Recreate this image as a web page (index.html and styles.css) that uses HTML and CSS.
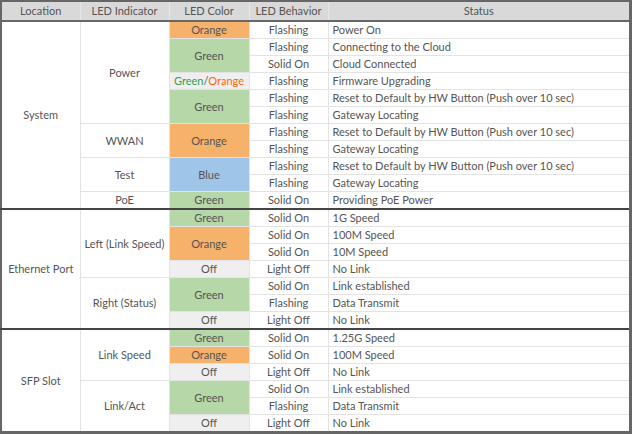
FILE: index.html
```html
<!DOCTYPE html>
<html>
<head>
<meta charset="utf-8">
<link rel="stylesheet" href="styles.css">
</head>
<body>
<table class="led">
  <colgroup>
    <col class="c-loc"><col class="c-ind"><col class="c-col"><col class="c-beh"><col class="c-sta">
  </colgroup>
  <thead>
    <tr><th>Location</th><th>LED Indicator</th><th>LED Color</th><th>LED Behavior</th><th>Status</th></tr>
  </thead>
  <tbody class="sec">
    <tr><td rowspan="11">System</td><td rowspan="6">Power</td><td class="orange">Orange</td><td>Flashing</td><td class="st">Power On</td></tr>
    <tr><td rowspan="2" class="green">Green</td><td>Flashing</td><td class="st">Connecting to the Cloud</td></tr>
    <tr><td>Solid On</td><td class="st">Cloud Connected</td></tr>
    <tr><td class="off"><span class="tg">Green</span>/<span class="to">Orange</span></td><td>Flashing</td><td class="st">Firmware Upgrading</td></tr>
    <tr><td rowspan="2" class="green">Green</td><td>Flashing</td><td class="st">Reset to Default by HW Button (Push over 10 sec)</td></tr>
    <tr><td>Flashing</td><td class="st">Gateway Locating</td></tr>
    <tr><td rowspan="2">WWAN</td><td rowspan="2" class="orange">Orange</td><td>Flashing</td><td class="st">Reset to Default by HW Button (Push over 10 sec)</td></tr>
    <tr><td>Flashing</td><td class="st">Gateway Locating</td></tr>
    <tr><td rowspan="2">Test</td><td rowspan="2" class="blue">Blue</td><td>Flashing</td><td class="st">Reset to Default by HW Button (Push over 10 sec)</td></tr>
    <tr><td>Flashing</td><td class="st">Gateway Locating</td></tr>
    <tr><td>PoE</td><td class="green">Green</td><td>Solid On</td><td class="st">Providing PoE Power</td></tr>
  </tbody>
  <tbody class="sec">
    <tr><td rowspan="7">Ethernet Port</td><td rowspan="4">Left (Link Speed)</td><td class="green">Green</td><td>Solid On</td><td class="st">1G Speed</td></tr>
    <tr><td rowspan="2" class="orange">Orange</td><td>Solid On</td><td class="st">100M Speed</td></tr>
    <tr><td>Solid On</td><td class="st">10M Speed</td></tr>
    <tr><td class="off">Off</td><td>Light Off</td><td class="st">No Link</td></tr>
    <tr><td rowspan="3">Right (Status)</td><td rowspan="2" class="green">Green</td><td>Solid On</td><td class="st">Link established</td></tr>
    <tr><td>Flashing</td><td class="st">Data Transmit</td></tr>
    <tr><td class="off">Off</td><td>Light Off</td><td class="st">No Link</td></tr>
  </tbody>
  <tbody class="sec">
    <tr><td rowspan="6">SFP Slot</td><td rowspan="3">Link Speed</td><td class="green">Green</td><td>Solid On</td><td class="st">1.25G Speed</td></tr>
    <tr><td class="orange">Orange</td><td>Solid On</td><td class="st">100M Speed</td></tr>
    <tr><td class="off">Off</td><td>Light Off</td><td class="st">No Link</td></tr>
    <tr><td rowspan="3">Link/Act</td><td rowspan="2" class="green">Green</td><td>Solid On</td><td class="st">Link established</td></tr>
    <tr><td>Flashing</td><td class="st">Data Transmit</td></tr>
    <tr><td class="off">Off</td><td>Light Off</td><td class="st">No Link</td></tr>
  </tbody>
</table>
</body>
</html>
```

FILE: styles.css
```css
html, body {
  margin: 0;
  padding: 0;
  background: #ffffff;
}
.led {
  width: 632px;
  border-collapse: collapse;
  table-layout: fixed;
  font-family: Lato, "Liberation Sans", sans-serif;
  font-size: 11px;
  color: #555555;
  border: 2px solid #666666;
  border-right-width: 3px;
  border-bottom-width: 3px;
}
.c-loc { width: 79px; }
.c-ind { width: 89px; }
.c-col { width: 80px; }
.c-beh { width: 79px; }
.led th {
  background: #d9d9d9;
  font-weight: normal;
  height: 18px;
  padding: 0;
  line-height: 14px;
  border-left: 1px solid #e6e6e6;
  border-bottom: 2px solid #666666;
  text-align: center;
}
.led td {
  height: 16px;
  padding: 0;
  line-height: 14px;
  text-align: center;
  vertical-align: middle;
  border: 1px solid #e3e3e3;
  white-space: nowrap;
}
.led tbody.sec + tbody.sec tr:first-child td {
  border-top: 2px solid #444444;
}
.led td.st {
  text-align: left;
  padding-left: 4px;
}
.orange { background: #f6b26b; }
.green { background: #b6d7a8; }
.blue { background: #9fc5e8; }
.off { background: #efefef; }
.tg { color: #2e9d4e; }
.to { color: #ff6600; }
```
